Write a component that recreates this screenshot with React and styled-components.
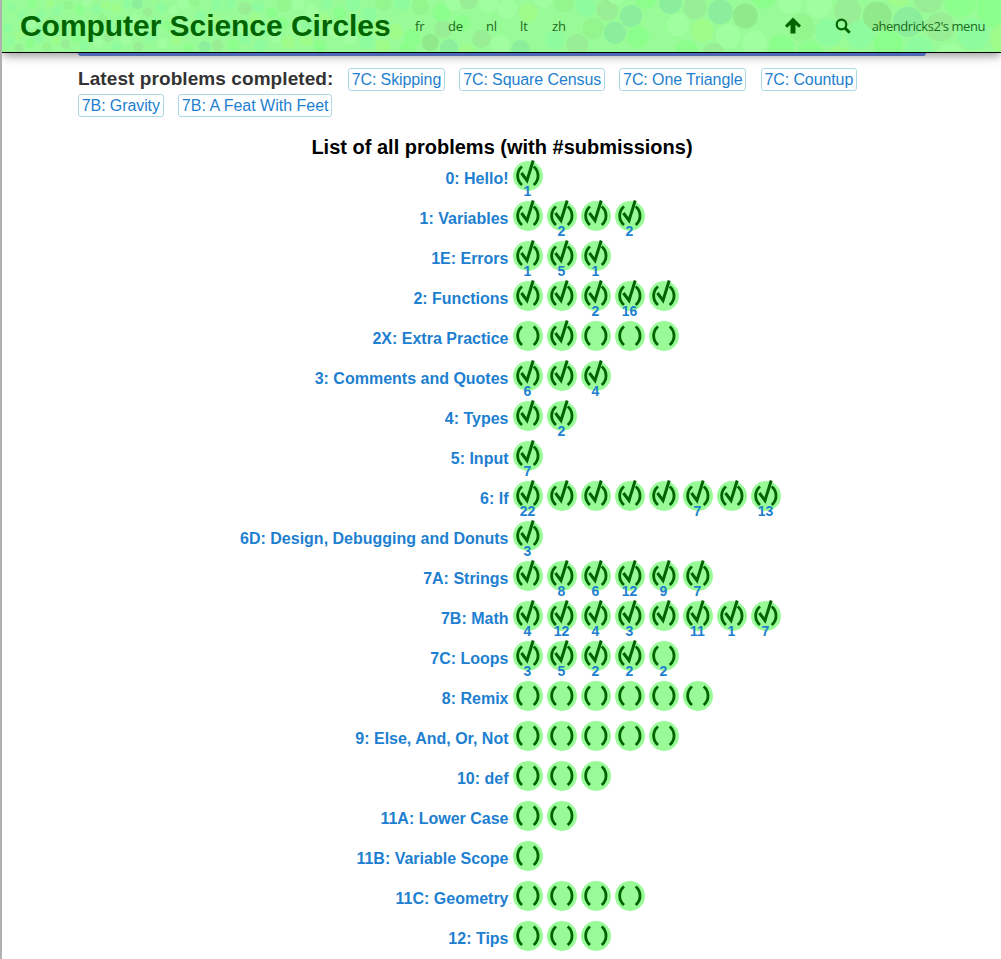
import React from "react";
import styled, { createGlobalStyle } from "styled-components";

const GlobalStyle = createGlobalStyle`
  *, *::before, *::after { box-sizing: border-box; }
  body {
    margin: 0;
    background: #fff;
    font-family: "Liberation Sans", Arial, sans-serif;
    overflow: hidden;
  }
  a { text-decoration: none; color: inherit; }
`;

const Page = styled.div`
  height: 959px;
  border-left: 2px solid #b0b0b0;
  overflow: hidden;
`;

const Header = styled.header`
  position: relative;
  z-index: 1;
  display: flex;
  align-items: center;
  height: 53px;
  padding: 0 16px 0 18px;
  border-bottom: 1px solid #000;
  background: #98fb98;
  box-shadow: 0 4px 9px -1px rgba(0, 0, 0, 0.4);
  color: #006400;
`;

const Backdrop = styled.svg`
  position: absolute;
  inset: 0;
  z-index: -1;
  width: 999px;
  height: 52px;
  opacity: 0.8;
`;

const SiteTitle = styled.h1`
  margin: 0;
  width: 395px;
  font-size: 30px;
  line-height: 52px;
  letter-spacing: -0.05px;
  white-space: nowrap;
`;

const Languages = styled.nav`
  display: flex;
  flex: 1;
`;

const HeaderLink = styled.a`
  width: ${(p) => p.$width || "auto"};
  font: 13px/52px "Open Sans", sans-serif;
  letter-spacing: ${(p) => (p.$tight ? "-0.45px" : "-0.1px")};
  color: #1b6b1b;
  white-space: nowrap;
`;

const Tools = styled.div`
  display: flex;
  align-items: center;
`;

const ToolIcon = styled.svg`
  width: 16px;
  height: 17px;
  margin-bottom: 2px;
  margin-right: ${(p) => p.$gap};
  fill: none;
  stroke: #006400;
`;

const Content = styled.main`
  width: 848px;
  margin-left: 76px;
`;

const BlueBar = styled.div`
  position: relative;
  z-index: 2;
  height: 3px;
  border-radius: 0 0 4px 4px;
  background: #4f69b4;
`;

const Latest = styled.section`
  display: flex;
  flex-wrap: wrap;
  align-items: center;
  gap: 3px 14.4px;
  margin-top: 12px;
`;

const LatestTitle = styled.h2`
  margin: -2px 0 0;
  font-size: 19px;
  line-height: 23px;
  letter-spacing: 0.08px;
  color: #333;
`;

const Chip = styled.a`
  height: 23px;
  padding: 0 2.8px;
  border: 1px solid #add8e6;
  border-radius: 3px;
  font-size: 16px;
  line-height: 21px;
  letter-spacing: ${(p) => (p.$loose ? "0" : "-0.1px")};
  color: #1e7fd0;
  white-space: nowrap;
`;

const ListTitle = styled.h2`
  margin: 17px 0 0;
  font-size: 20px;
  line-height: 26px;
  text-align: center;
  color: #000;
`;

const Lesson = styled.div`
  display: flex;
  height: 40px;
`;

const LessonName = styled.a`
  width: 430.5px;
  margin-right: 4.5px;
  font-size: 16px;
  font-weight: bold;
  line-height: 38px;
  text-align: right;
  color: #1e7fd0;
`;

const Problems = styled.div`
  display: flex;
  gap: 4px;
`;

const Problem = styled.a`
  position: relative;
  width: 30px;
  height: 32px;
`;

const Badge = styled.svg`
  display: block;
  width: 30px;
  height: 31px;
`;

const Count = styled.span`
  position: absolute;
  top: 23px;
  left: -5.5px;
  width: 40px;
  font-size: 14px;
  font-weight: bold;
  line-height: 16px;
  text-align: center;
  color: #1e7fd0;
`;

// x, y, radius, tint, on a canvas three times the header's size
const bubbles = [
  [33, 20, 12, "b"], [66, 48, 14, "b"], [97, 12, 12, "g"], [123, 44, 12, "b"], [150, 10, 13, "y"],
  [172, 32, 14, "b"], [205, 16, 14, "o"], [238, 31, 14, "g"], [262, 4, 14, "l"], [290, 30, 14, "b"],
  [318, 16, 13, "y"], [350, 26, 15, "y"], [382, 14, 13, "b"], [412, 10, 17, "t"], [443, 36, 14, "r"],
  [485, 22, 15, "b"], [520, 30, 14, "l"], [549, 13, 17, "l"], [585, 6, 15, "o"], [602, 47, 16, "b"],
  [649, 14, 17, "b"], [690, 13, 16, "b"], [736, 25, 20, "r"], [775, 19, 18, "b"], [815, 38, 16, "g"],
  [852, 15, 21, "o"], [895, 14, 18, "l"], [935, 33, 21, "l"], [980, 12, 18, "b"], [1018, 40, 20, "g"],
  [1057, 12, 22, "b"], [1107, 43, 23, "b"], [1150, 8, 24, "o"], [1205, 8, 24, "b"], [1261, 20, 26, "o"],
  [1325, 38, 27, "g"], [1362, 8, 25, "l"], [1406, 0, 28, "r"], [1466, 10, 29, "l"], [1522, 26, 30, "l"],
  [25, 82, 14, "b"], [57, 105, 13, "y"], [92, 70, 15, "l"], [120, 90, 14, "b"], [150, 65, 13, "o"],
  [176, 82, 14, "o"], [208, 70, 13, "l"], [240, 86, 15, "g"], [275, 74, 14, "y"], [307, 57, 14, "o"],
  [333, 79, 16, "b"], [364, 66, 14, "g"], [405, 55, 15, "l"], [416, 96, 15, "l"], [465, 68, 16, "b"],
  [503, 78, 15, "g"], [546, 70, 16, "l"], [585, 85, 17, "g"], [636, 61, 18, "y"], [682, 77, 17, "b"],
  [720, 78, 18, "l"], [764, 58, 17, "y"], [799, 90, 20, "b"], [846, 72, 20, "g"], [887, 88, 18, "l"],
  [926, 78, 21, "b"], [971, 60, 20, "y"], [1006, 94, 20, "l"], [1079, 89, 23, "g"], [1136, 83, 23, "y"],
  [1185, 95, 24, "y"], [1237, 112, 25, "g"], [1329, 88, 26, "r"], [1385, 70, 25, "g"], [1444, 117, 27, "r"],
  [28, 126, 13, "b"], [57, 145, 13, "r"], [90, 130, 14, "g"], [116, 116, 14, "b"], [141, 140, 14, "o"],
  [167, 119, 13, "y"], [196, 132, 14, "r"], [229, 111, 15, "g"], [252, 136, 15, "b"], [293, 128, 15, "l"],
  [325, 112, 15, "r"], [350, 140, 14, "b"], [377, 119, 17, "l"], [415, 140, 15, "r"], [452, 112, 15, "b"],
  [488, 130, 16, "l"], [530, 120, 16, "y"], [564, 146, 16, "g"], [614, 140, 18, "t"], [652, 137, 18, "r"],
  [701, 136, 18, "g"], [735, 115, 18, "b"], [781, 138, 20, "b"], [825, 112, 18, "l"], [865, 126, 20, "y"],
  [920, 119, 20, "y"], [960, 139, 20, "g"], [1049, 111, 22, "l"], [1101, 125, 22, "b"], [1149, 139, 23, "y"],
  [1222, 149, 25, "g"], [1291, 127, 26, "d"], [1347, 144, 27, "t"], [1400, 157, 25, "y"], [1500, 134, 29, "l"],
  [1561, 148, 28, "t"], [1585, 39, 29, "y"], [1630, -5, 29, "l"], [1665, 120, 30, "b"], [1690, 6, 30, "o"],
  [1757, 19, 32, "b"], [1822, 30, 32, "r"], [1893, 48, 33, "t"], [1850, -20, 33, "l"], [1938, -4, 31, "g"],
  [2011, 8, 34, "t"], [1779, 85, 32, "o"], [1845, 98, 33, "t"], [1914, 111, 33, "g"], [1732, 134, 32, "r"],
  [2034, 75, 34, "l"], [2085, 22, 35, "r"], [2161, 35, 37, "t"], [2236, 48, 37, "d"], [2290, -10, 36, "g"],
  [2108, 92, 34, "y"], [2184, 109, 37, "l"], [2264, 128, 38, "l"], [2060, 155, 35, "g"], [2141, 164, 35, "r"],
  [2370, 5, 37, "l"], [2456, 14, 40, "l"], [2543, 34, 41, "r"], [2403, 82, 41, "o"], [2487, 97, 41, "b"],
  [2344, 142, 38, "g"], [2430, 160, 38, "g"], [2515, 175, 36, "y"], [2580, 105, 42, "b"], [2632, 48, 43, "d"],
  [2695, -20, 41, "y"], [2724, 66, 45, "t"], [2785, -5, 44, "r"], [2664, 134, 44, "g"], [2757, 151, 43, "b"],
  [2820, 80, 44, "r"], [2881, 5, 47, "g"], [2919, 102, 47, "b"], [2850, 178, 47, "l"], [2992, 24, 60, "g"],
  [3018, 115, 47, "y"],
];

const tints = {
  b: "#8cfba0",
  t: "#88eb9f",
  g: "#88ff88",
  o: "#94f38c",
  d: "#8fe686",
  l: "#a2ffa2",
  r: "#9aea94",
  y: "#a1fd88",
};

// One entry per problem: "-" open, "v" solved; a number is the submission count
const lessons = [
  ["0: Hello!", "v1"],
  ["1: Variables", "v v2 v v2"],
  ["1E: Errors", "v1 v5 v1"],
  ["2: Functions", "v v v2 v16 v"],
  ["2X: Extra Practice", "- v - - -"],
  ["3: Comments and Quotes", "v6 v v4"],
  ["4: Types", "v v2"],
  ["5: Input", "v7"],
  ["6: If", "v22 v v v v v7 v v13"],
  ["6D: Design, Debugging and Donuts", "v3"],
  ["7A: Strings", "v v8 v6 v12 v9 v7"],
  ["7B: Math", "v4 v12 v4 v3 v v11 v1 v7"],
  ["7C: Loops", "v3 v5 v2 v2 -2"],
  ["8: Remix", "- - - - - -"],
  ["9: Else, And, Or, Not", "- - - - -"],
  ["10: def", "- - -"],
  ["11A: Lower Case", "- -"],
  ["11B: Variable Scope", "-"],
  ["11C: Geometry", "- - - -"],
  ["12: Tips", "- - -"],
];

const latest = [
  "7C: Skipping",
  "7C: Square Census",
  "7C: One Triangle",
  "7C: Countup",
  "7B: Gravity",
  "7B: A Feat With Feet",
];

const languages = [
  ["fr", "33px"],
  ["de", "38px"],
  ["nl", "34px"],
  ["lt", "32px"],
  ["zh", "20px"],
];

function ProblemBadge({ code }) {
  const count = code.slice(1);
  return (
    <Problem href="#">
      <Badge viewBox="0 0 30 31">
        <circle cx="15" cy="16" r="15" fill="#98fb98" />
        <g fill="none" stroke="#006400" strokeWidth="2.8">
          <path d="M9 6.500C3.200 11.500 3.200 20 9 25M20.700 6.500C26.500 11.500 26.500 20 20.700 25" />
          {code[0] === "v" && <path strokeWidth="3" d="M8.400 13L14 20.500L20.200 0.500" />}
        </g>
      </Badge>
      {count && <Count>{count}</Count>}
    </Problem>
  );
}

export default function App() {
  return (
    <Page>
      <GlobalStyle />
      <Header>
        <Backdrop viewBox="6 0 2997 156" preserveAspectRatio="none" aria-hidden="true">
          {bubbles.map(([x, y, r, tint], i) => (
            <circle key={i} cx={x} cy={y} r={r} fill={tints[tint]} />
          ))}
        </Backdrop>
        <SiteTitle>Computer Science Circles</SiteTitle>
        <Languages>
          {languages.map(([code, width]) => (
            <HeaderLink key={code} href="#" $width={width}>{code}</HeaderLink>
          ))}
        </Languages>
        <Tools>
          <ToolIcon viewBox="0 0 16 17" $gap="34px">
            <path d="M8 0.500L16 8.500L14 10.700L10.500 7.800V16.500H5.500V7.800L2 10.700L0 8.500Z" fill="#006400" stroke="none" />
          </ToolIcon>
          <ToolIcon viewBox="0 0 16 17" $gap="21px">
            <circle cx="6.500" cy="7.500" r="4.800" strokeWidth="2.200" />
            <path d="M10 11L14.700 15.700" strokeWidth="3" />
          </ToolIcon>
          <HeaderLink href="#" $tight>ahendricks2's menu</HeaderLink>
        </Tools>
      </Header>
      <Content>
        <BlueBar />
        <Latest>
          <LatestTitle>Latest problems completed:</LatestTitle>
          {latest.map((name) => (
            <Chip key={name} href="#" $loose={name.includes("Feat")}>{name}</Chip>
          ))}
        </Latest>
        <ListTitle>List of all problems (with #submissions)</ListTitle>
        {lessons.map(([name, codes]) => (
          <Lesson key={name}>
            <LessonName href="#">{name}</LessonName>
            <Problems>
              {codes.split(" ").map((code, i) => (
                <ProblemBadge key={i} code={code} />
              ))}
            </Problems>
          </Lesson>
        ))}
      </Content>
    </Page>
  );
}
